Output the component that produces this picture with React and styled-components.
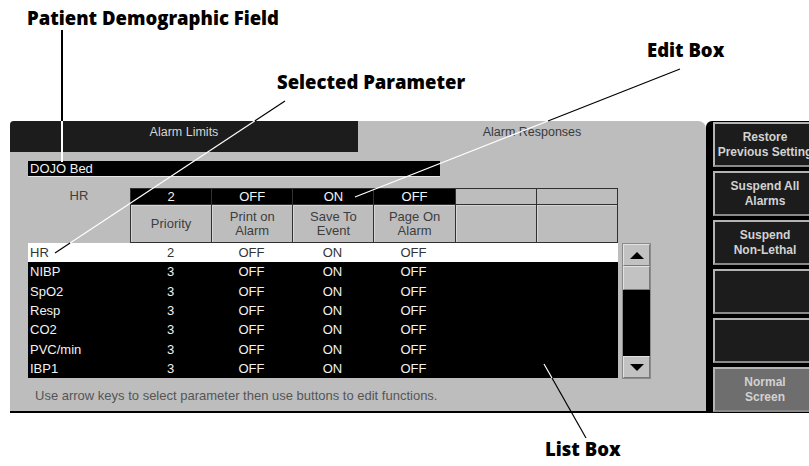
import React from "react";
import styled, { createGlobalStyle } from "styled-components";

const GlobalStyle = createGlobalStyle`
  html, body {
    margin: 0;
    padding: 0;
    background: #fff;
    overflow: hidden;
  }
`;

const Page = styled.div`
  position: relative;
  width: 809px;
  height: 466px;
  padding-top: 121px;
  box-sizing: border-box;
  overflow: hidden;
  font-family: "Liberation Sans", Arial, sans-serif;
`;

const Screen = styled.div`
  display: flex;
  margin-left: 10px;
  height: 292px;
`;

const Panel = styled.div`
  width: 696px;
  display: flex;
  flex-direction: column;
  background: #bdbdbd;
  border-radius: 4px 8px 0 0;
  border-bottom: 2px solid #000;
  box-sizing: border-box;
  overflow: hidden;
`;

const TabRow = styled.div`
  display: flex;
  height: 31px;
  flex-shrink: 0;
`;

const Tab = styled.div`
  width: ${(p) => (p.$active ? "auto" : "348px")};
  flex: ${(p) => (p.$active ? 1 : "none")};
  background: ${(p) => (p.$active ? "transparent" : "#1c1c1c")};
  color: ${(p) => (p.$active ? "#3a3a3a" : "#d4d4d4")};
  font-size: 12.5px;
  line-height: 14px;
  text-align: center;
  padding-top: 4px;
  box-sizing: border-box;
`;

const Body = styled.div`
  padding: 9px 0 0 18px;
`;

const NameField = styled.div`
  width: 410px;
  height: 15px;
  padding-left: 2px;
  background: #000;
  color: #f2f2f2;
  font-size: 13px;
  line-height: 15px;
  border-bottom: 1px solid #e6e6e6;
`;

const HeaderRow = styled.div`
  display: flex;
  margin-top: 11px;
`;

const ParamLabel = styled.div`
  width: 102px;
  text-align: center;
  color: #3e3e3e;
  font-size: 13px;
  line-height: 16px;
`;

const CellGrid = styled.div`
  width: 488px;
  height: 55px;
  display: grid;
  grid-template-columns: repeat(6, 1fr);
  grid-template-rows: 15px 37px;
  gap: 1px;
  background: #303030;
  border: 1px solid #303030;
  box-sizing: border-box;
`;

const EditCell = styled.div`
  background: ${(p) => (p.$empty ? "#bdbdbd" : "#000")};
  color: #f4f4f4;
  font-size: 13px;
  line-height: 15px;
  text-align: center;
`;

const LabelCell = styled.div`
  display: flex;
  align-items: center;
  justify-content: center;
  background: #bdbdbd;
  color: #3e3e3e;
  font-size: 13px;
  line-height: 14px;
  text-align: center;
  box-shadow: inset 1px 1px 0 #d6d6d6;
`;

const ListRow = styled.div`
  display: flex;
  gap: 4px;
`;

const ListBox = styled.div`
  width: 590px;
  height: 135px;
  background: #000;
  display: grid;
  grid-auto-rows: 19.3px;
`;

const ListItem = styled.div`
  display: grid;
  grid-template-columns: 102px repeat(4, 81px) 1fr;
  align-items: center;
  background: ${(p) => (p.$selected ? "#fff" : "#000")};
  color: ${(p) => (p.$selected ? "#333" : "#f2f2f2")};
  font-size: 13px;
`;

const ItemCell = styled.span`
  text-align: ${(p) => (p.$left ? "left" : "center")};
  padding-left: ${(p) => (p.$left ? "2px" : "0")};
`;

const Scrollbar = styled.div`
  width: 29px;
  height: 136px;
  display: flex;
  flex-direction: column;
  border: 1px solid #8a8a8a;
  box-sizing: border-box;
  background: #000;
`;

const ScrollButton = styled.div`
  height: ${(p) => p.$h}px;
  display: flex;
  align-items: center;
  justify-content: center;
  background: #c2c2c2;
  border: 1px solid;
  border-color: #e2e2e2 #7a7a7a #7a7a7a #e2e2e2;
  box-sizing: border-box;
  flex-shrink: 0;
`;

const Track = styled.div`
  flex: 1;
  background: #000;
`;

const Arrow = styled.span`
  width: 0;
  height: 0;
  border-left: 7px solid transparent;
  border-right: 7px solid transparent;
  border-${(p) => (p.$down ? "top" : "bottom")}: 7px solid #000;
`;

const HelpText = styled.div`
  margin-top: 10px;
  padding-left: 7px;
  color: #555;
  font-size: 13px;
  line-height: 14px;
`;

const ButtonColumn = styled.div`
  flex: 1;
  display: flex;
  flex-direction: column;
  gap: 4px;
  padding: 1px 0 0 7px;
  background: #000;
  border-top-left-radius: 6px;
  overflow: hidden;
`;

const SoftKey = styled.div`
  width: 104px;
  height: 45px;
  flex-shrink: 0;
  display: flex;
  align-items: center;
  justify-content: center;
  text-align: center;
  background: ${(p) => (p.$light ? "#6e6e6e" : "#1c1c1c")};
  color: #d2d2d2;
  font-size: 12px;
  font-weight: bold;
  line-height: 15px;
  white-space: nowrap;
  border: 2px solid;
  border-color: #b4b4b4 #6a6a6a #8a8a8a #b4b4b4;
  box-sizing: border-box;
`;

const Callout = styled.span`
  position: absolute;
  left: ${(p) => p.$x}px;
  top: ${(p) => p.$y}px;
  font-family: "Open Sans", "DejaVu Sans", sans-serif;
  font-weight: 800;
  font-size: 18.5px;
  line-height: 22px;
  color: #000;
  white-space: nowrap;
`;

const Leaders = styled.svg`
  position: absolute;
  left: 0;
  top: 0;
  pointer-events: none;
`;

const rows = [
  { name: "HR", pr: "2", selected: true },
  { name: "NIBP", pr: "3" },
  { name: "SpO2", pr: "3" },
  { name: "Resp", pr: "3" },
  { name: "CO2", pr: "3" },
  { name: "PVC/min", pr: "3" },
  { name: "IBP1", pr: "3" },
];

const keys = [
  ["Restore", "Previous Setting"],
  ["Suspend All", "Alarms"],
  ["Suspend", "Non-Lethal"],
  [],
  [],
];

// callout leader lines: black over paper, white over the dark screen
const segments = [
  { x1: 62, y1: 30, x2: 62, y2: 121, c: "#000", w: 2 },
  { x1: 62, y1: 121, x2: 62, y2: 162, c: "#fff", w: 2 },
  { x1: 285, y1: 101, x2: 254.7, y2: 121, c: "#000", w: 1.2 },
  { x1: 254.7, y1: 121, x2: 70.1, y2: 243, c: "#fff", w: 1.2 },
  { x1: 70.1, y1: 243, x2: 55, y2: 253, c: "#000", w: 1.2 },
  { x1: 680, y1: 69, x2: 548, y2: 121, c: "#000", w: 1.2 },
  { x1: 548, y1: 121, x2: 355, y2: 197, c: "#fff", w: 1.2 },
  { x1: 544, y1: 364, x2: 552, y2: 378, c: "#fff", w: 1.2 },
  { x1: 552, y1: 378, x2: 586, y2: 438, c: "#000", w: 1.2 },
];

export default function App() {
  return (
    <Page>
      <GlobalStyle />
      <Screen>
        <Panel>
          <TabRow>
            <Tab>Alarm Limits</Tab>
            <Tab $active>Alarm Responses</Tab>
          </TabRow>
          <Body>
            <NameField>DOJO Bed</NameField>
            <HeaderRow>
              <ParamLabel>HR</ParamLabel>
              <CellGrid>
                <EditCell>2</EditCell>
                <EditCell>OFF</EditCell>
                <EditCell>ON</EditCell>
                <EditCell>OFF</EditCell>
                <EditCell $empty />
                <EditCell $empty />
                <LabelCell>Priority</LabelCell>
                <LabelCell>
                  Print on
                  <br />
                  Alarm
                </LabelCell>
                <LabelCell>
                  Save To
                  <br />
                  Event
                </LabelCell>
                <LabelCell>
                  Page On
                  <br />
                  Alarm
                </LabelCell>
                <LabelCell />
                <LabelCell />
              </CellGrid>
            </HeaderRow>
            <ListRow>
              <ListBox>
                {rows.map((r) => (
                  <ListItem key={r.name} $selected={r.selected}>
                    <ItemCell $left>{r.name}</ItemCell>
                    <ItemCell>{r.pr}</ItemCell>
                    <ItemCell>OFF</ItemCell>
                    <ItemCell>ON</ItemCell>
                    <ItemCell>OFF</ItemCell>
                    <ItemCell />
                  </ListItem>
                ))}
              </ListBox>
              <Scrollbar>
                <ScrollButton $h={22}>
                  <Arrow />
                </ScrollButton>
                <ScrollButton $h={24} />
                <Track />
                <ScrollButton $h={22}>
                  <Arrow $down />
                </ScrollButton>
              </Scrollbar>
            </ListRow>
            <HelpText>
              Use arrow keys to select parameter then use buttons to edit functions.
            </HelpText>
          </Body>
        </Panel>
        <ButtonColumn>
          {keys.map((k, i) => (
            <SoftKey key={i}>
              {k.length > 0 && (
                <span>
                  {k[0]}
                  <br />
                  {k[1]}
                </span>
              )}
            </SoftKey>
          ))}
          <SoftKey $light>
            <span>
              Normal
              <br />
              Screen
            </span>
          </SoftKey>
        </ButtonColumn>
      </Screen>

      <Callout $x={27} $y={7}>Patient Demographic Field</Callout>
      <Callout $x={277} $y={71}>Selected Parameter</Callout>
      <Callout $x={647} $y={39}>Edit Box</Callout>
      <Callout $x={545} $y={438}>List Box</Callout>

      <Leaders width="809" height="466">
        {segments.map((s, i) => (
          <line
            key={i}
            x1={s.x1}
            y1={s.y1}
            x2={s.x2}
            y2={s.y2}
            stroke={s.c}
            strokeWidth={s.w}
          />
        ))}
      </Leaders>
    </Page>
  );
}
